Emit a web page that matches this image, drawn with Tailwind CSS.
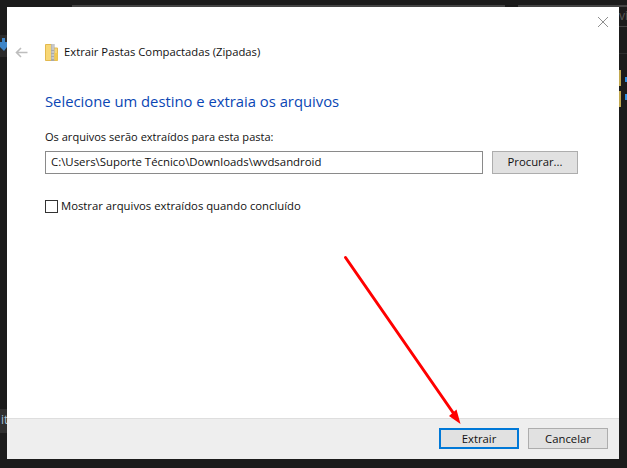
<!DOCTYPE html>
<html><head><meta charset="utf-8"><script src="https://cdn.jsdelivr.net/npm/@tailwindcss/browser@4"></script></head>
<body class="m-0 bg-[#1b1b1b]">
<div class="relative w-[627px] h-[468px] overflow-hidden bg-[#1b1b1b] font-['Open_Sans',sans-serif]">
  <!-- background fragments behind the dialog -->
  <div class="absolute left-[72px] top-[5px] w-[433px] h-[2px] bg-[#444]"></div>
  <div class="absolute left-[518px] top-[5px] w-[109px] h-[2px] bg-[#444]"></div>
  <div class="absolute left-[619px] top-[26px] w-[8px] h-px bg-[#444]"></div>
  <div class="absolute left-[619px] top-[53px] w-[8px] h-px bg-[#2e2e2e]"></div>
  <div class="absolute left-[619px] top-[9px] text-[#5c5c5c] text-[12px] leading-[14px]">vi</div>
  <div class="absolute left-0 top-[35px] w-[7px] h-[22px] bg-[#2b2b2b]"></div>
  <svg class="absolute left-0 top-[38px]" width="7" height="14" viewBox="0 0 7 14"><path d="M2 0h3v4h2v5l-3 4L0 9V4h2z" fill="#3f86c8"/></svg>
  <div class="absolute left-0 top-[409px] w-[7px] h-[24px] bg-[#2f2f2f]"></div>
  <div class="absolute left-[1px] top-[412px] text-[#a9c3d6] text-[12px] leading-[16px]">it</div>
  <div class="absolute left-[619px] top-[70px] w-[2px] h-[16px] bg-[#c2a84f]"></div>
  <div class="absolute left-[619px] top-[91px] w-[2px] h-[16px] bg-[#c2a84f]"></div>
  <div class="absolute left-[625px] top-[77px] w-[2px] h-[5px] bg-[#2f8fe0]"></div>
  <div class="absolute left-[625px] top-[94px] w-[2px] h-[6px] bg-[#2f8fe0]"></div>

  <!-- dialog -->
  <div class="absolute left-[7px] top-[7px] w-[612px] h-[452px] bg-white flex flex-col">
    <div class="flex-1 relative">
      <div class="h-[31px] flex justify-end pr-[10px] pt-[8px]">
        <svg width="12" height="12" viewBox="0 0 12 12" class="mt-px"><path d="M1 1l10 10M11 1L1 11" stroke="#8f8f8f" stroke-width="1" fill="none"/></svg>
      </div>
      <div class="flex items-center h-[26px] mt-px">
        <svg class="ml-[8px]" width="13" height="11" viewBox="0 0 13 11"><path d="M12.500 5.500H2M6 1L1.500 5.500 6 10" stroke="#bdbdbd" stroke-width="1.600" fill="none"/></svg>
        <svg class="ml-[17px]" width="13" height="17" viewBox="0 0 13 17"><path d="M0.500 0.500h7v3.500h5v12.500h-12z" fill="#f8d775" stroke="#e3b94e"/><rect x="6" y="0" width="3.500" height="17" fill="#a9a9a9"/><path d="M6.500 1h2.500M6.500 3h2.500M6.500 5h2.500M6.500 8h2.500M6.500 11h2.500M6.500 14h2.500" stroke="#e6e6e6"/><rect x="9.500" y="9" width="3" height="7.500" fill="#f2c94f"/></svg>
        <span class="ml-[6px] text-[11.250px] leading-[16px] text-[#111]">Extrair Pastas Compactadas (Zipadas)</span>
      </div>
      <h1 class="ml-[38px] mt-[25px] text-[14.800px] leading-[22px] font-normal text-[#0a46b4]">Selecione um destino e extraia os arquivos</h1>
      <p class="ml-[38px] mt-[17px] text-[11.050px] leading-[16px] text-[#111]">Os arquivos serão extraídos para esta pasta:</p>
      <div class="ml-[38px] mt-[6px] flex gap-[9px]">
        <div class="w-[438px] h-[23px] border border-[#8a8a8a] pl-[5px] text-[11.400px] leading-[19px] text-[#111] whitespace-nowrap overflow-hidden">C:\Users\Suporte Técnico\Downloads\wvdsandroid</div>
        <div class="w-[86px] h-[23px] border border-[#adadad] bg-[#e1e1e1] text-center text-[11.300px] leading-[20px] text-[#111]">Procurar...</div>
      </div>
      <label class="ml-[38px] mt-[24px] flex items-center gap-[3px]">
        <span class="w-[13px] h-[13px] border border-[#333] bg-white"></span>
        <span class="text-[11.300px] leading-[16px] text-[#111]">Mostrar arquivos extraídos quando concluído</span>
      </label>
    </div>
    <div class="h-[41px] bg-[#eeeeee] border-t border-[#dedede] flex justify-end gap-[9px] pr-[11px] pt-[9px]">
      <div class="w-[80px] h-[21px] border-2 border-[#0078d7] bg-[#e1e1e1] text-center text-[11.300px] leading-[17px] text-[#111]">Extrair</div>
      <div class="w-[80px] h-[21px] border border-[#adadad] bg-[#e1e1e1] text-center text-[11.300px] leading-[19px] text-[#111]">Cancelar</div>
    </div>
  </div>

  <!-- red annotation arrow -->
  <svg class="absolute left-0 top-0 pointer-events-none" width="627" height="468" viewBox="0 0 627 468">
    <path d="M345.500 257.500L454 414" stroke="#ff0000" stroke-width="3" stroke-linecap="round" fill="none"/>
    <path d="M460.500 424L449 416 456.500 409.500z" fill="#ff0000"/>
  </svg>
</div>
</body></html>
